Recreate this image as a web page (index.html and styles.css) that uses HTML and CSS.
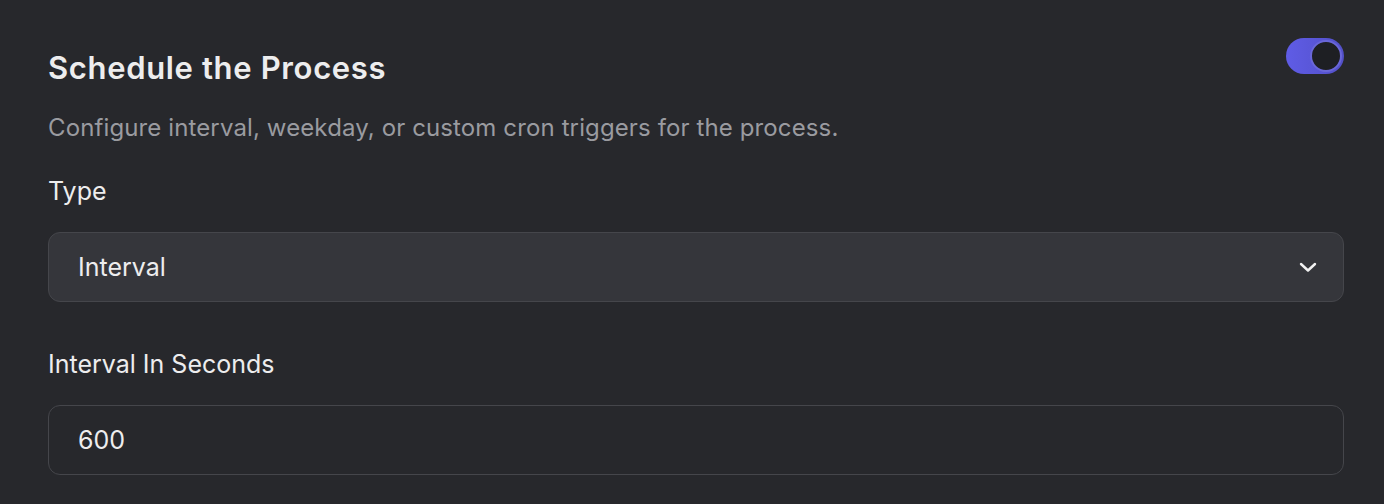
FILE: index.html
```html
<!DOCTYPE html>
<html>
<head>
  <title>Schedule the Process</title>
  <link rel="stylesheet" href="styles.css">
</head>
<body>
  <div class="panel">
    <div class="header">
      <h2>Schedule the Process</h2>
      <div class="toggle on"><div class="knob"></div></div>
    </div>
    <p class="desc">Configure interval, weekday, or custom cron triggers for the process.</p>

    <div class="field">
      <label>Type</label>
      <div class="select">
        <span>Interval</span>
        <svg width="20" height="20" viewBox="0 0 20 20" fill="none">
          <path d="M3 7l7 6.5L17 7" stroke="#f2f2f2" stroke-width="2.4" stroke-linecap="round" stroke-linejoin="round"/>
        </svg>
      </div>
    </div>

    <div class="field">
      <label>Interval In Seconds</label>
      <div class="input">600</div>
    </div>
  </div>
</body>
</html>
```

FILE: styles.css
```css
body {
  margin: 0;
  background-color: #27282c;
  color: #ededee;
  font-family: Inter, "Noto Sans", sans-serif;
}
.panel {
  padding: 38px 40px 0 48px;
}
.header {
  display: flex;
  justify-content: space-between;
  align-items: flex-start;
}
h2 {
  margin: 12px 0 0;
  font-size: 31px;
  font-weight: 600;
  line-height: 36px;
  letter-spacing: 0.65px;
}
.toggle {
  width: 58px;
  height: 36px;
  border-radius: 18px;
  background: linear-gradient(90deg, #5f5ce6, #5350c8);
  box-sizing: border-box;
  padding: 2px;
  display: flex;
  justify-content: flex-end;
}
.knob {
  width: 32px;
  height: 32px;
  border-radius: 50%;
  background: #1e1f23;
  box-sizing: border-box;
  border: 2px solid #6a67d8;
}
.desc {
  margin: 26px 0 0;
  font-size: 24px;
  line-height: 32px;
  letter-spacing: 0.12px;
  color: #9a9ba0;
}
.field {
  margin-top: 31px;
}
.field + .field {
  margin-top: 46px;
}
label {
  display: block;
  font-size: 25px;
  line-height: 32px;
  margin-bottom: 25px;
}
.select, .input {
  height: 70px;
  box-sizing: border-box;
  border: 1px solid #45464b;
  border-radius: 12px;
  padding: 0 25px 0 29px;
  display: flex;
  align-items: center;
  justify-content: space-between;
  font-size: 25px;
}
.select {
  background-color: #35363b;
}
.input {
  background-color: #27282c;
}
```
